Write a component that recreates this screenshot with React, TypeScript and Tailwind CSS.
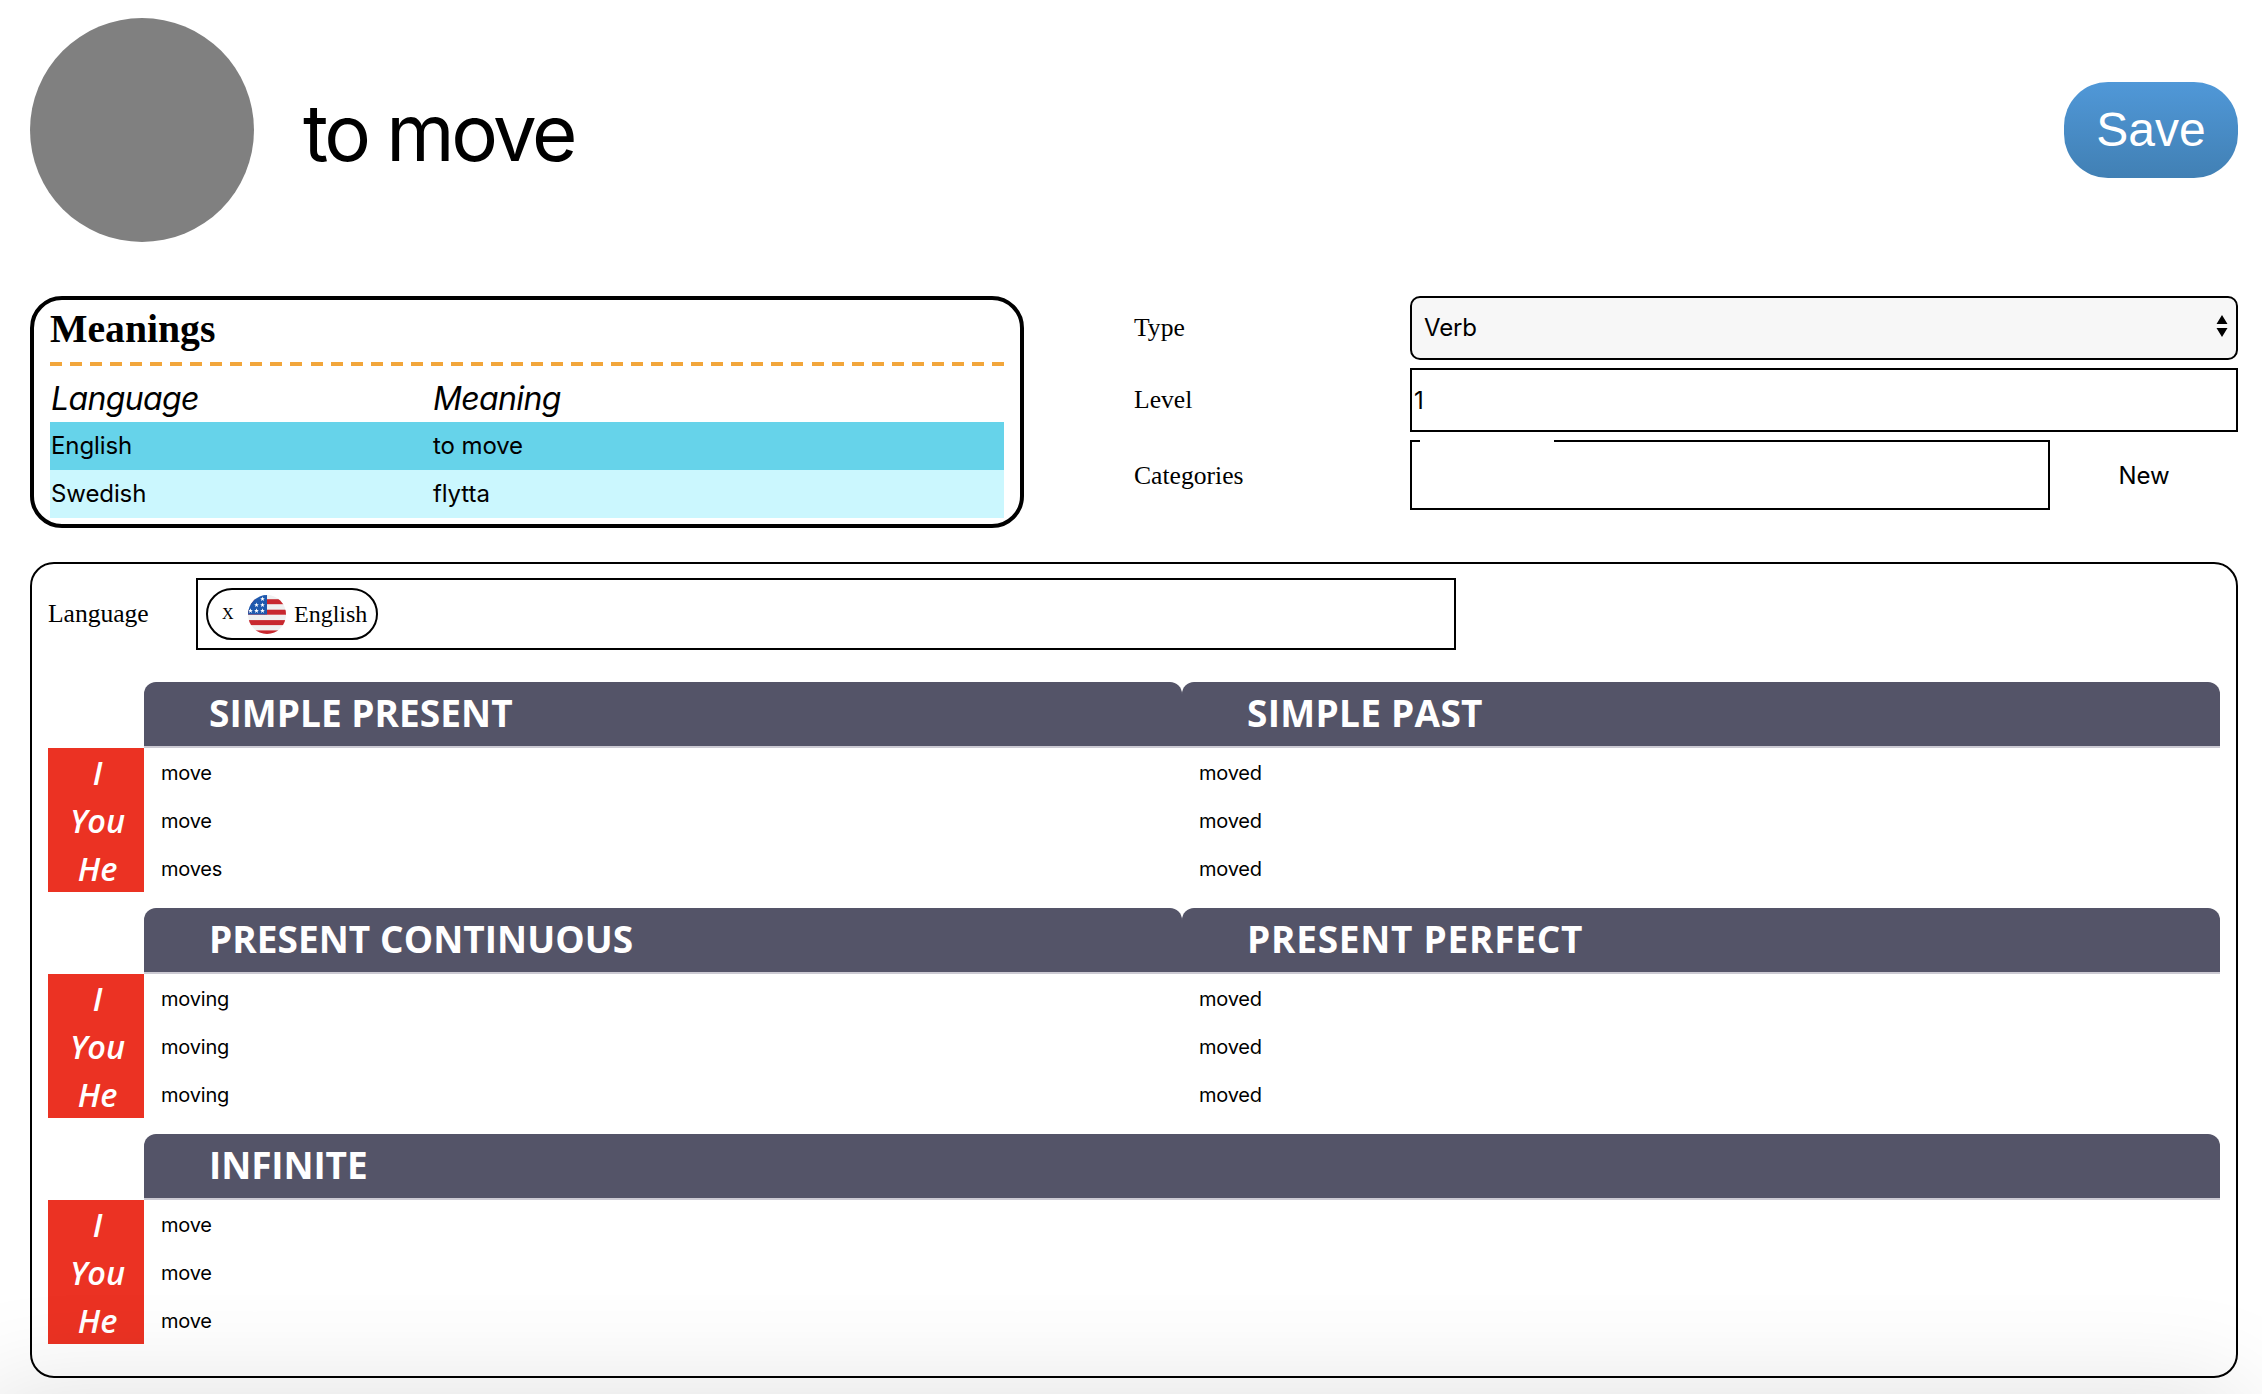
import React from "react";

type Tense = { title: string; tracking: string; forms: string[] };

const pronouns = ["I", "You", "He"];

const groups: Tense[][] = [
  [
    { title: "SIMPLE PRESENT", tracking: "tracking-[0.05px]", forms: ["move", "move", "moves"] },
    { title: "SIMPLE PAST", tracking: "tracking-[0.3px]", forms: ["moved", "moved", "moved"] },
  ],
  [
    { title: "PRESENT CONTINUOUS", tracking: "tracking-[0.05px]", forms: ["moving", "moving", "moving"] },
    { title: "PRESENT PERFECT", tracking: "tracking-[0.75px]", forms: ["moved", "moved", "moved"] },
  ],
  [{ title: "INFINITE", tracking: "tracking-[-0.1px]", forms: ["move", "move", "move"] }],
];

const meanings = [
  { language: "English", meaning: "to move", row: "bg-[#66d3ea]" },
  { language: "Swedish", meaning: "flytta", row: "bg-[#cbf7fe]" },
];

const stars = [
  [14.5, 4],
  [8.5, 10],
  [14.5, 10],
  [2.5, 15.8],
  [8.5, 15.8],
  [14.5, 15.8],
];

function Flag() {
  return (
    <svg viewBox="0 0 38 39" className="h-[39px] w-[38px] shrink-0">
      <defs>
        <clipPath id="flag-round">
          <ellipse cx="19" cy="19.5" rx="19" ry="19.5" />
        </clipPath>
        <path
          id="flag-star"
          d="M0-2.5.6-.8 2.4-.8 1 .3 1.5 2.1 0 1-1.5 2.1-1 .3-2.4-.8-.6-.8Z"
          fill="#fff"
        />
      </defs>
      <g clipPath="url(#flag-round)">
        <rect width="38" height="39" fill="#f0f0f0" />
        {[4.2, 14.7, 25.1, 35.4].map((y) => (
          <rect key={y} y={y} width="38" height="5" fill="#c8282f" />
        ))}
        <rect width="16.5" height="19.5" fill="#1f59ae" />
        <rect x="16" width="3" height="19.5" fill="#1f59ae" />
        {stars.map(([x, y]) => (
          <use key={`${x}-${y}`} href="#flag-star" x={x} y={y} />
        ))}
      </g>
    </svg>
  );
}

function Meanings() {
  return (
    <section className="h-[232px] w-[994px] overflow-hidden rounded-[32px] border-4 border-black px-4">
      <h2 className="h-[62px] pt-[6px] font-['Liberation_Serif',serif] text-[39.7px] leading-[46px] font-bold">
        Meanings
      </h2>
      <div className="h-1 bg-[repeating-linear-gradient(90deg,#f2a63b_0_12px,transparent_12px_20.04px)]" />
      <div className="grid h-14 grid-cols-[382px_1fr] pt-[9px] text-[32px] leading-[48px] tracking-[-0.65px] italic">
        <span className="pl-px">Language</span>
        <span className="pl-px">Meaning</span>
      </div>
      {meanings.map((m) => (
        <div
          key={m.language}
          className={`grid h-12 grid-cols-[382px_1fr] text-2xl leading-[47px] tracking-[-0.1px] ${m.row}`}
        >
          <span className="pl-px">{m.language}</span>
          <span className="pl-px">{m.meaning}</span>
        </div>
      ))}
    </section>
  );
}

function Details() {
  const label = "w-[276px] font-['Liberation_Serif',serif] text-[25.6px]";
  return (
    <section className="flex w-[1104px] flex-col gap-2">
      <div className="flex h-16 items-center">
        <label className={label}>Type</label>
        <div className="relative h-16 grow">
          <select className="h-16 w-full appearance-none rounded-[10px] border-2 border-black bg-[#f7f7f7] pl-3 text-2xl tracking-[-0.2px]">
            <option>Verb</option>
          </select>
          <svg
            viewBox="0 0 12 22"
            className="pointer-events-none absolute top-[19px] right-[10px] h-[22px] w-3"
          >
            <path d="M6 0 11.5 9H.5ZM6 22 .5 13h11Z" />
          </svg>
        </div>
      </div>
      <div className="flex h-16 items-center">
        <label className={label}>Level</label>
        <input
          defaultValue="1"
          className="h-16 min-w-0 grow border-2 border-black pl-0.5 text-2xl"
        />
      </div>
      <div className="flex h-[70px] items-center">
        <label className={`pt-0.5 ${label}`}>Categories</label>
        <div className="relative h-[70px] w-[640px] border-2 border-black">
          <div className="absolute -top-0.5 left-2 h-0.5 w-[134px] bg-white" />
        </div>
        <button className="grow pt-0.5 text-center text-2xl tracking-[-0.1px]">New</button>
      </div>
    </section>
  );
}

function TenseGroup({ tenses }: { tenses: Tense[] }) {
  return (
    <div className="flex h-[210px]">
      <div className="w-24 pt-[66px]">
        {pronouns.map((p) => (
          <div
            key={p}
            className="h-12 bg-[#eb3223] pl-[3px] text-center font-['Open_Sans',sans-serif] text-[32.5px] leading-[49px] font-semibold text-white italic"
          >
            {p}
          </div>
        ))}
      </div>
      {tenses.map((t) => (
        <div key={t.title} className="flex-1">
          <div className="border-b-2 border-[#cccad3]">
            <h3
              className={`h-16 rounded-t-xl bg-[#545468] pl-[65px] font-['Open_Sans',sans-serif] text-[37px] leading-[61px] font-bold text-white ${t.tracking}`}
            >
              {t.title}
            </h3>
          </div>
          {t.forms.map((f, i) => (
            <div key={i} className="h-12 pl-[17px] text-xl leading-[51px] tracking-[-0.2px]">
              {f}
            </div>
          ))}
        </div>
      ))}
    </div>
  );
}

export default function App() {
  return (
    <main className="relative h-[1394px] w-[2262px] overflow-hidden bg-white pt-[18px] pr-6 pl-[30px] font-['Inter',sans-serif] text-black">
      <header className="flex h-56 items-center">
        <div className="size-56 rounded-full bg-[#808080]" />
        <h1 className="grow pt-1.5 pl-[49px] text-[78px] leading-none tracking-[-3.4px]">
          to move
        </h1>
        <button className="h-24 w-[174px] rounded-[44px] bg-linear-to-b from-[#5098d8] to-[#4180b4] font-['Liberation_Sans',sans-serif] text-5xl text-white">
          Save
        </button>
      </header>

      <div className="mt-[54px] flex justify-between">
        <Meanings />
        <Details />
      </div>

      <section className="mt-[34px] h-[816px] rounded-3xl border-2 border-black px-4 pt-3.5 font-['Inter',sans-serif]">
        <div className="flex h-[72px] items-center font-['Liberation_Serif',serif] text-[25.6px]">
          <span className="w-[148px] tracking-[-0.05px]">Language</span>
          <div className="flex h-[72px] w-[1260px] items-center border-2 border-black px-2">
            <div className="flex h-[52px] w-[172px] items-center rounded-[26px] border-2 border-black pl-3.5 text-2xl">
              <button className="w-[26px] text-left text-base">X</button>
              <Flag />
              <span className="pl-2">English</span>
            </div>
          </div>
        </div>
        <div className="mt-8 flex flex-col gap-4">
          {groups.map((g) => (
            <TenseGroup key={g[0].title} tenses={g} />
          ))}
        </div>
      </section>

      <div className="pointer-events-none absolute inset-x-0 bottom-0 h-28 overflow-hidden">
        <div className="mt-28 mr-5 -ml-5 h-40 shadow-[0_0_110px_rgba(0,0,0,0.13)]" />
      </div>
    </main>
  );
}
